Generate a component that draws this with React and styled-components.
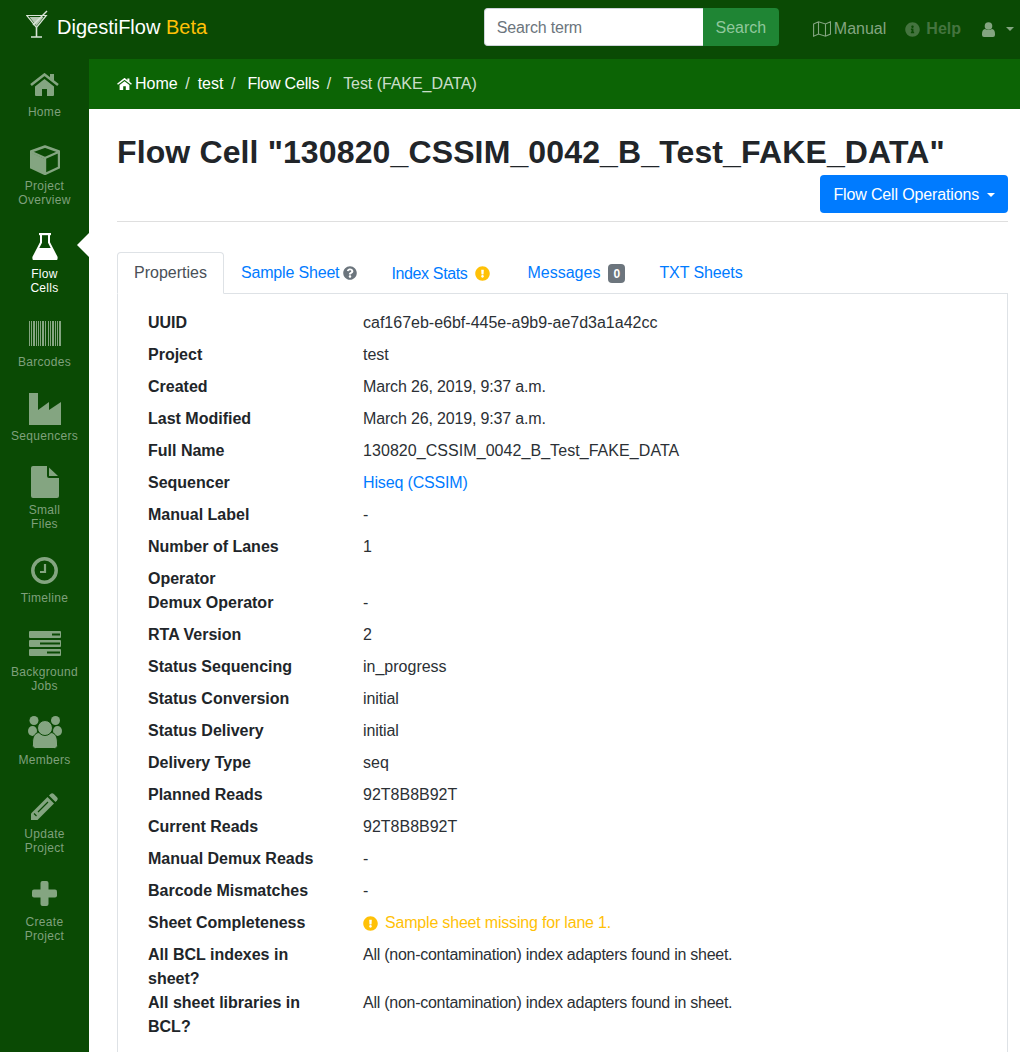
import React from 'react';
import styled, { createGlobalStyle } from 'styled-components';
import { FaExclamationCircle, FaInfoCircle, FaQuestionCircle } from 'react-icons/fa';

const BAR_GREEN = '#0a4a04';
const ICON_DIM = '#84a581';

const GlobalStyle = createGlobalStyle`
  html, body {
    margin: 0;
    height: 100%;
    overflow: hidden;
  }
  body {
    font-family: "Liberation Sans", Arial, sans-serif;
    font-size: 16px;
    line-height: 24px;
    color: #212529;
    background: #fff;
  }
  * {
    box-sizing: border-box;
  }
`;

const Page = styled.div`
  height: 100vh;
  display: flex;
  flex-direction: column;
  overflow: hidden;
`;

const Navbar = styled.header`
  flex: 0 0 59px;
  display: flex;
  align-items: center;
  background: ${BAR_GREEN};
  padding: 0 6px 1px 26px;
`;

const Brand = styled.div`
  display: flex;
  align-items: center;
  gap: 9px;
  margin: 0 auto 4px 0;
  font-size: 20px;
  color: #fff;

  svg {
    margin-bottom: 6px;
  }
`;

const BrandSuffix = styled.span`
  color: #ffc107;
`;

const SearchForm = styled.form`
  display: flex;
  height: 38px;
  margin: 0 34px 4px 0;
`;

const SearchInput = styled.input`
  width: 219px;
  border: 1px solid #ced4da;
  border-right: 0;
  border-radius: 4px 0 0 4px;
  padding: 1px 12px 0;
  font: inherit;
  letter-spacing: -0.18px;
  color: #495057;

  &::placeholder {
    color: #6c757d;
    opacity: 1;
  }
`;

const SearchButton = styled.button`
  width: 76px;
  border: 0;
  border-radius: 0 4px 4px 0;
  background: #1f8534;
  color: #91c89d;
  font: inherit;
  padding: 2px 0 0;
`;

const NavLink = styled.a`
  display: flex;
  align-items: center;
  gap: ${({ $gap }) => $gap || 5}px;
  margin-right: ${({ $right }) => $right || 0}px;
  color: ${({ $dim }) => ($dim ? '#44743f' : ICON_DIM)};
  font-weight: ${({ $dim }) => ($dim ? 700 : 400)};
`;

const Caret = styled.span`
  display: inline-block;
  border-top: 4.8px solid ${({ $color }) => $color || '#fff'};
  border-left: 4.8px solid transparent;
  border-right: 4.8px solid transparent;
`;

const Body = styled.div`
  flex: 1;
  display: flex;
  min-height: 0;
`;

const Sidebar = styled.nav`
  flex: 0 0 89px;
  background: ${BAR_GREEN};
  padding-top: 8px;
`;

const SideItem = styled.a`
  position: relative;
  display: flex;
  flex-direction: column;
  align-items: center;
  padding: 0 0 22px;
  color: ${({ $active }) => ($active ? '#fff' : '#7fa07c')};
  font-size: 12px;
  line-height: 14px;
  letter-spacing: 0.3px;
  text-align: center;
`;

const SideIcon = styled.div`
  height: 36px;
  margin-bottom: 2px;
  padding-bottom: ${({ $lift }) => ($lift > 0 ? $lift : 0)}px;
  padding-top: ${({ $lift }) => ($lift < 0 ? -$lift : 0)}px;
  display: flex;
  align-items: center;
  justify-content: center;
  color: ${({ $active }) => ($active ? '#fff' : ICON_DIM)};
`;

const ActiveArrow = styled.span`
  position: absolute;
  right: 0;
  top: 4px;
  border-top: 12px solid transparent;
  border-bottom: 12px solid transparent;
  border-right: 12px solid #fff;
`;

const Main = styled.main`
  flex: 1;
  min-width: 0;
  display: flex;
  flex-direction: column;
`;

const Breadcrumb = styled.ol`
  flex: 0 0 50px;
  display: flex;
  align-items: center;
  margin: 0;
  padding: 0 0 0 28px;
  list-style: none;
  background: #0c6405;
  color: #fff;
`;

const Crumb = styled.li`
  display: flex;
  align-items: center;
  padding-left: ${({ $first }) => ($first ? 0 : 7.5)}px;
  color: ${({ $current }) => ($current ? 'rgba(255, 255, 255, 0.8)' : '#fff')};

  &::before {
    content: ${({ $first }) => ($first ? 'none' : '"/"')};
    padding-right: 8px;
    color: rgba(255, 255, 255, 0.85);
  }
`;

const CrumbText = styled.span`
  margin-left: ${({ $inset }) => $inset || 0}px;
  letter-spacing: ${({ $track }) => $track || 0}px;
`;

const Content = styled.div`
  flex: 1;
  min-height: 0;
  display: flex;
  flex-direction: column;
  padding: 22px 12px 0 28px;
`;

const Title = styled.h1`
  margin: 0;
  font-size: 32px;
  line-height: 42px;
  letter-spacing: 0.13px;
  font-weight: 700;
  white-space: nowrap;
`;

const TitleActions = styled.div`
  display: flex;
  justify-content: flex-end;
  margin-top: 2px;
  padding-bottom: 8px;
  border-bottom: 1px solid #dfdfdf;
`;

const PrimaryButton = styled.button`
  display: flex;
  align-items: center;
  gap: 8px;
  height: 38px;
  padding: 1px 13px 0;
  border: 0;
  border-radius: 4px;
  background: #007bff;
  color: #fff;
  font: inherit;
  letter-spacing: -0.15px;
`;

const Tabs = styled.ul`
  display: flex;
  margin: 30px 0 0;
  padding: 0;
  list-style: none;
  border-bottom: 1px solid #dee2e6;
`;

const Tab = styled.li`
  display: flex;
  align-items: center;
  gap: ${({ $gap }) => $gap || 0}px;
  height: 42px;
  margin-bottom: -1px;
  padding: 0 16px;
  border: 1px solid ${({ $active }) => ($active ? '#dee2e6' : 'transparent')};
  border-bottom-color: ${({ $active }) => ($active ? '#fff' : 'transparent')};
  border-radius: 4px 4px 0 0;
  background: ${({ $active }) => ($active ? '#fff' : 'transparent')};
  color: ${({ $active }) => ($active ? '#495057' : '#007bff')};
`;

const TabText = styled.span`
  margin-left: ${({ $inset }) => $inset || 0}px;
  padding-top: ${({ $drop }) => $drop || 0}px;
  letter-spacing: ${({ $track }) => $track || 0}px;
`;

const Badge = styled.span`
  display: inline-block;
  min-width: 17px;
  padding: 4px 0 3px;
  border-radius: 4px;
  background: #6c757d;
  color: #fff;
  font-size: 12px;
  font-weight: 700;
  line-height: 12px;
  text-align: center;
`;

const Panel = styled.div`
  flex: 1;
  border: 1px solid #dee2e6;
  border-top: 0;
  padding: 17px 30px;
`;

const Properties = styled.dl`
  display: grid;
  grid-template-columns: 185px 1fr;
  column-gap: 30px;
  margin: 0;
`;

const Term = styled.dt`
  font-weight: 700;
`;

const Value = styled.dd`
  color: ${({ $warning }) => ($warning ? '#ffc107' : '#2b3035')};
  display: ${({ $warning }) => ($warning ? 'flex' : 'block')};
  align-items: center;
  gap: 7px;
  margin: 0 0 ${({ $empty }) => ($empty ? 0 : 8)}px;
  min-height: ${({ $empty }) => ($empty ? 0 : 24)}px;
  letter-spacing: ${({ $track }) => $track || 0}px;
`;

const Link = styled.a`
  color: #007bff;
`;

const Glyph = ({ w, h, children }) => (
  <svg width={w} height={h} viewBox={`0 0 ${w} ${h}`} fill="currentColor">
    {children}
  </svg>
);

const HomeIcon = () => (
  <Glyph w={29} h={23}>
    <path d="M1 12 14.5 1.5 28 12" fill="none" stroke="currentColor" strokeWidth="2.6" />
    <path d="M20 1h4v7l-4-3z" />
    <path d="M5 13.5 14.5 6l9.5 7.5V22a1 1 0 0 1-1 1h-6v-7h-5v7H6a1 1 0 0 1-1-1z" />
  </Glyph>
);

const CubeIcon = () => (
  <Glyph w={30} h={30}>
    <path d="M1 7.5 15 14v15L1 22z" />
    <path
      d="M15 1.5 29 6.5V22.500L15 29 1 22.500V6.500ZM1.500 7 15 13 28.500 7M15 13V29"
      fill="none"
      stroke="currentColor"
      strokeWidth="2.4"
      strokeLinejoin="round"
    />
  </Glyph>
);

const FlaskIcon = () => (
  <Glyph w={26} h={27}>
    <path d="M7 0h12v2.200H7z" />
    <path
      d="M9 2v7.500L1.500 24a1.400 1.400 0 0 0 1.300 2h20.400a1.400 1.400 0 0 0 1.300-2L17 9.500V2"
      fill="none"
      stroke="currentColor"
      strokeWidth="2"
    />
    <path d="M6.500 15h13l6 11a1 1 0 0 1-1 1H1.500a1 1 0 0 1-1-1z" />
  </Glyph>
);

const BARS = [
  [0, 1],
  [2, 1],
  [4, 2],
  [7, 1],
  [9, 1],
  [11, 1],
  [13, 2],
  [16, 1],
  [19, 1],
  [21, 1],
  [23, 2],
  [26, 1],
  [28, 1],
  [30, 2],
];

const BarcodeIcon = () => (
  <Glyph w={32} h={25}>
    {BARS.map(([x, width]) => (
      <rect key={x} x={x} y="0" width={width} height="25" />
    ))}
  </Glyph>
);

const FactoryIcon = () => (
  <Glyph w={32} h={32}>
    <path d="M0 0h9v17l11-8v8l12-8v23H0z" />
  </Glyph>
);

const FileIcon = () => (
  <Glyph w={28} h={32}>
    <path d="M2 0h14v10a2 2 0 0 0 2 2h10v18a2 2 0 0 1-2 2H2a2 2 0 0 1-2-2V2a2 2 0 0 1 2-2z" />
    <path d="M18 1.500 27 10h-9z" />
  </Glyph>
);

const ClockIcon = () => (
  <Glyph w={27} h={27}>
    <circle cx="13.500" cy="13.500" r="11.700" fill="none" stroke="currentColor" strokeWidth="3.500" />
    <path d="M14 7v8H9" fill="none" stroke="currentColor" strokeWidth="2.200" />
  </Glyph>
);

const SERVER_SLOTS = [
  { y: 0, x: 23 },
  { y: 9, x: 11 },
  { y: 18, x: 18 },
];

const ServerIcon = () => (
  <Glyph w={32} h={25}>
    {SERVER_SLOTS.map(({ y, x }) => (
      <g key={y}>
        <rect y={y} width="32" height="7" rx="1" />
        <rect x={x} y={y + 2.500} width={31 - x} height="2" fill={BAR_GREEN} />
      </g>
    ))}
  </Glyph>
);

const UsersIcon = () => (
  <Glyph w={34} h={33}>
    <circle cx="6" cy="4.500" r="4.500" />
    <circle cx="27.500" cy="4.500" r="4.500" />
    <ellipse cx="4.500" cy="15" rx="4.500" ry="5" />
    <ellipse cx="29.500" cy="15" rx="4.500" ry="5" />
    <path
      d="M4.500 27c0-6 2-10 6.500-10.500 3.500 2.500 8.500 2.500 12 0C27.500 17 29.500 21 29.500 27v2.500a3 3 0 0 1-3 3h-19a3 3 0 0 1-3-3z"
      stroke={BAR_GREEN}
      strokeWidth="1"
    />
    <circle cx="17" cy="12" r="7.500" stroke={BAR_GREEN} strokeWidth="1" />
  </Glyph>
);

const PencilIcon = () => (
  <Glyph w={27} h={27}>
    <path d="M0 20.500 16.500 4l6.500 6.500L6.500 27H0z" />
    <path d="M18 2.500l1.500-1.500a2.500 2.500 0 0 1 3.300 0l3.200 3.200a2.500 2.500 0 0 1 0 3.300L24.500 9z" />
    <path d="M3 20.500 5.500 23M7 19l10-10" fill="none" stroke={BAR_GREEN} strokeWidth="1.200" />
  </Glyph>
);

const PlusIcon = () => (
  <Glyph w={25} h={25}>
    <rect x="8.500" width="8" height="25" rx="2" />
    <rect y="8.500" width="25" height="8" rx="2" />
  </Glyph>
);

const MartiniIcon = () => (
  <svg width="22" height="28" viewBox="0 0 22 28" fill="none" stroke="#d8e4d6" strokeWidth="1.200">
    <path d="M.7 5.500h19.600L10.500 17.500z" />
    <path d="M3.500 7h14l-7 9z" fill="#b6c8b3" stroke="none" />
    <path d="M7 15 21 1" strokeWidth="1.500" />
    <path d="M10.500 17.500v9M5 27h11" strokeWidth="1.600" />
  </svg>
);

const MapIcon = () => (
  <svg width="18" height="16" viewBox="0 0 18 16" fill="none" stroke="currentColor" strokeWidth="1.100">
    <path d="M.6 3 5.500.8 12.500 3l5-2.200v12.200l-5 2.200-7-2.200-4.900 2.200zM5.500.8v12.200M12.500 3v12.200" />
  </svg>
);

const UserIcon = () => (
  <svg width="13" height="15" viewBox="0 0 13 15" fill="currentColor">
    <circle cx="6.500" cy="4" r="3.800" />
    <path d="M0 12c0-3 1-4.800 3-5 2 1.400 5 1.400 7 0 2 .2 3 2 3 5v1a2 2 0 0 1-2 2H2a2 2 0 0 1-2-2z" />
  </svg>
);

const HomeCrumbIcon = () => (
  <svg width="15" height="12" viewBox="0 0 29 23" fill="currentColor">
    <path d="M1 12 14.500 1.500 28 12" fill="none" stroke="currentColor" strokeWidth="3" />
    <path d="M20 1h4v7l-4-3z" />
    <path d="M5 13.500 14.500 6l9.500 7.500V23h-7v-7h-5v7H5z" />
  </svg>
);

const SIDE_ITEMS = [
  { icon: HomeIcon, lines: ['Home'], lift: 1 },
  { icon: CubeIcon, lines: ['Project', 'Overview'], lift: -2 },
  { icon: FlaskIcon, lines: ['Flow', 'Cells'], lift: 1, active: true },
  { icon: BarcodeIcon, lines: ['Barcodes'], lift: 3 },
  { icon: FactoryIcon, lines: ['Sequencers'] },
  { icon: FileIcon, lines: ['Small', 'Files'], lift: 2 },
  { icon: ClockIcon, lines: ['Timeline'], lift: 1 },
  { icon: ServerIcon, lines: ['Background', 'Jobs'], lift: 3 },
  { icon: UsersIcon, lines: ['Members'], lift: 1 },
  { icon: PencilIcon, lines: ['Update', 'Project'], lift: 1 },
  { icon: PlusIcon, lines: ['Create', 'Project'], lift: 3 },
];

const BCL_NOTE = 'All (non-contamination) index adapters found in sheet.';

const PROPERTIES = [
  ['UUID', 'caf167eb-e6bf-445e-a9b9-ae7d3a1a42cc'],
  ['Project', 'test'],
  ['Created', 'March 26, 2019, 9:37 a.m.', -0.16],
  ['Last Modified', 'March 26, 2019, 9:37 a.m.', -0.16],
  ['Full Name', '130820_CSSIM_0042_B_Test_FAKE_DATA', 0.06],
  ['Sequencer', <Link key="seq">Hiseq (CSSIM)</Link>, -0.15],
  ['Manual Label', '-'],
  ['Number of Lanes', '1'],
  ['Operator', null],
  ['Demux Operator', '-'],
  ['RTA Version', '2'],
  ['Status Sequencing', 'in_progress'],
  ['Status Conversion', 'initial', -0.1],
  ['Status Delivery', 'initial', -0.1],
  ['Delivery Type', 'seq'],
  ['Planned Reads', '92T8B8B92T'],
  ['Current Reads', '92T8B8B92T'],
  ['Manual Demux Reads', '-'],
  ['Barcode Mismatches', '-'],
];

const App = () => (
  <Page>
    <GlobalStyle />
    <Navbar>
      <Brand>
        <MartiniIcon />
        <span>
          DigestiFlow <BrandSuffix>Beta</BrandSuffix>
        </span>
      </Brand>
      <SearchForm>
        <SearchInput placeholder="Search term" />
        <SearchButton type="button">Search</SearchButton>
      </SearchForm>
      <NavLink $right={19} $gap={3}>
        <MapIcon />
        Manual
      </NavLink>
      <NavLink $dim $right={21} $gap={6}>
        <FaInfoCircle size={15} />
        Help
      </NavLink>
      <NavLink $gap={11}>
        <UserIcon />
        <Caret $color={ICON_DIM} />
      </NavLink>
    </Navbar>
    <Body>
      <Sidebar>
        {SIDE_ITEMS.map(({ icon: Icon, lines, active, lift }) => (
          <SideItem key={lines.join(' ')} $active={active}>
            <SideIcon $active={active} $lift={lift || 0}>
              <Icon />
            </SideIcon>
            {lines.map((line) => (
              <span key={line}>{line}</span>
            ))}
            {active && <ActiveArrow />}
          </SideItem>
        ))}
      </Sidebar>
      <Main>
        <Breadcrumb>
          <Crumb $first>
            <HomeCrumbIcon />
            <CrumbText $inset={3}>Home</CrumbText>
          </Crumb>
          <Crumb>test</Crumb>
          <Crumb>
            <CrumbText $inset={4} $track={-0.2}>Flow Cells</CrumbText>
          </Crumb>
          <Crumb $current>
            <CrumbText $inset={4} $track={-0.06}>Test (FAKE_DATA)</CrumbText>
          </Crumb>
        </Breadcrumb>
        <Content>
          <Title>Flow Cell "130820_CSSIM_0042_B_Test_FAKE_DATA"</Title>
          <TitleActions>
            <PrimaryButton type="button">
              Flow Cell Operations
              <Caret />
            </PrimaryButton>
          </TitleActions>
          <Tabs>
            <Tab $active>Properties</Tab>
            <Tab $gap={4}>
              <TabText $track={-0.17}>Sample Sheet</TabText>
              <FaQuestionCircle size={14} color="#6c757d" />
            </Tab>
            <Tab $gap={8}>
              <TabText $drop={1} $track={-0.36}>Index Stats</TabText>
              <FaExclamationCircle size={15} color="#ffc107" />
            </Tab>
            <Tab $gap={8}>
              <TabText $inset={3}>Messages</TabText>
              <Badge>0</Badge>
            </Tab>
            <Tab>
              <TabText $track={-0.1}>TXT Sheets</TabText>
            </Tab>
          </Tabs>
          <Panel>
            <Properties>
              {PROPERTIES.map(([term, value, track]) => (
                <React.Fragment key={term}>
                  <Term>{term}</Term>
                  <Value $empty={value === null} $track={track}>
                    {value}
                  </Value>
                </React.Fragment>
              ))}
              <Term>Sheet Completeness</Term>
              <Value $warning $track={-0.19}>
                <FaExclamationCircle size={15} />
                Sample sheet missing for lane 1.
              </Value>
              <Term>All BCL indexes in sheet?</Term>
              <Value $track={-0.26}>{BCL_NOTE}</Value>
              <Term>All sheet libraries in BCL?</Term>
              <Value $track={-0.26}>{BCL_NOTE}</Value>
            </Properties>
          </Panel>
        </Content>
      </Main>
    </Body>
  </Page>
);

export default App;
